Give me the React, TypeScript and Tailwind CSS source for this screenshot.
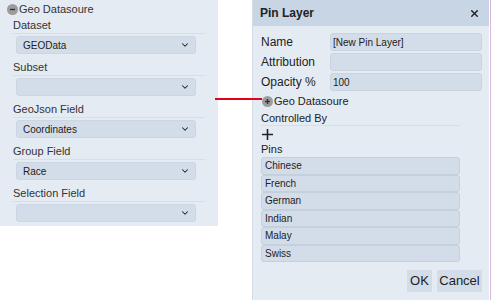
import { ChevronDown, X } from "lucide-react";

function Toggle({ sign }: { sign: "-" | "+" }) {
  return (
    <span className="w-[11px] h-[11px] rounded-full bg-[#9c9c9c] flex items-center justify-center flex-shrink-0">
      <svg width="7" height="7" viewBox="0 0 7 7">
        <path d="M1 3.5h5" stroke="#333" strokeWidth="1.4" />
        {sign === "+" && <path d="M3.5 1v5" stroke="#333" strokeWidth="1.4" />}
      </svg>
    </span>
  );
}

function Field({ label, value }: { label: string; value?: string }) {
  return (
    <div className="h-[42px]">
      <div className="mx-[13px] h-[16px] border-b border-[#d6dee8] leading-[15px] text-[11px] text-[#333]">
        {label}
      </div>
      <div className="ml-[16px] mr-[22px] mt-[2px] h-[18px] rounded-[3px] bg-[#d3dde9] border border-[#cbd6e2] flex items-center justify-between pl-[6px] pr-[5px] text-[10px] text-[#222]">
        <span>{value}</span>
        <ChevronDown className="w-[10px] h-[10px]" strokeWidth={2.5} />
      </div>
    </div>
  );
}

function InputRow({ label, value }: { label: string; value?: string }) {
  return (
    <div className="flex items-start h-[20px]">
      <span className="w-[69px] h-[18px] leading-[18px] text-[12px] text-[#222]">{label}</span>
      <div className="flex-1 h-[18px] rounded-[3px] bg-[#d3dde9] border border-[#c9d4e0] flex items-center px-[2px] text-[10px] text-[#222]">
        {value}
      </div>
    </div>
  );
}

export default function App() {
  const pins = ["Chinese", "French", "German", "Indian", "Malay", "Swiss"];
  return (
    <div className="w-[491px] h-[300px] bg-white flex font-['Liberation_Sans',Arial,sans-serif] relative overflow-hidden">
      {/* Geo datasource panel */}
      <div className="w-[218px] h-[226px] bg-[#e5ebf3] pt-[3px]">
        <div className="flex items-center gap-[1px] pl-[7px] h-[12px] mb-[3px] text-[11px] leading-[12px] text-[#333]">
          <Toggle sign="-" />
          <span>Geo Datasoure</span>
        </div>
        <Field label="Dataset" value="GEOData" />
        <Field label="Subset" />
        <Field label="GeoJson Field" value="Coordinates" />
        <Field label="Group Field" value="Race" />
        <Field label="Selection Field" />
      </div>

      {/* connector */}
      <div className="absolute left-[215px] top-[98px] w-[47px] h-[2px] bg-[#e3001b]" />

      {/* Pin Layer dialog */}
      <div className="ml-[34px] w-[237px] h-[300px] bg-[#e5ebf3] border-l border-[#d3dbe5] flex flex-col">
        <div className="h-[26px] flex-shrink-0 bg-[#c7d5e4] flex items-center justify-between pl-[7px] pr-[9px]">
          <span className="text-[12px] font-bold text-[#222]">Pin Layer</span>
          <X className="w-[11px] h-[11px] text-[#222]" strokeWidth={3} />
        </div>
        <div className="pl-[8px] pr-[7px] pt-[7px]">
          <InputRow label="Name" value="[New Pin Layer]" />
          <InputRow label="Attribution" />
          <InputRow label="Opacity %" value="100" />
        </div>
        <div className="flex items-center gap-[1px] pl-[9px] mt-[1px] h-[14px] text-[11px] leading-[14px] text-[#222]">
          <Toggle sign="+" />
          <span>Geo Datasoure</span>
        </div>
        <div className="ml-[8px] mr-[29px] h-[18px] pt-[3px] border-b border-[#d6dee8] text-[11px] leading-[14px] text-[#222]">
          Controlled By
        </div>
        <div className="pl-[9px] h-[16px] flex items-center">
          <svg width="11" height="11" viewBox="0 0 11 11">
            <path d="M0 5.5h11M5.5 0v11" stroke="#222" strokeWidth="1.6" />
          </svg>
        </div>
        <div className="pl-[8px] h-[14px] text-[11px] leading-[14px] text-[#222]">Pins</div>
        <div className="ml-[8px] mr-[29px] mt-[1px] flex flex-col">
          {pins.map((p) => (
            <div
              key={p}
              className="h-[17.5px] rounded-[3px] bg-[#d3dde9] border border-[#c5d0dc] flex items-center pl-[3px] text-[10px] text-[#222]"
            >
              {p}
            </div>
          ))}
        </div>
        <div className="flex justify-end gap-[5px] pr-[7px] mt-[8px]">
          <button className="w-[25px] h-[22px] bg-[#d3dde9] text-[13px] text-[#222]">OK</button>
          <button className="w-[45px] h-[22px] bg-[#d3dde9] text-[13px] text-[#222]">Cancel</button>
        </div>
      </div>
      <div className="w-[1px] h-[300px] bg-[#d9b7d6] ml-auto" />
    </div>
  );
}
